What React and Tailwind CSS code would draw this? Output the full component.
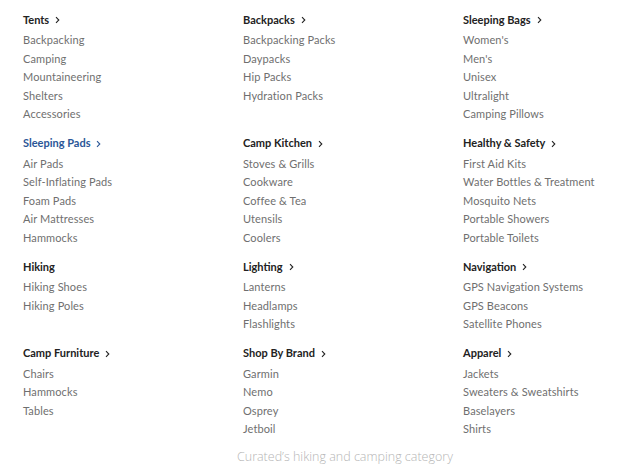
import React from "react";

const rows = [
  [
    { title: "Tents", arrow: true, items: ["Backpacking", "Camping", "Mountaineering", "Shelters", "Accessories"] },
    { title: "Backpacks", arrow: true, items: ["Backpacking Packs", "Daypacks", "Hip Packs", "Hydration Packs"] },
    { title: "Sleeping Bags", arrow: true, items: ["Women's", "Men's", "Unisex", "Ultralight", "Camping Pillows"] },
  ],
  [
    { title: "Sleeping Pads", arrow: true, active: true, items: ["Air Pads", "Self-Inflating Pads", "Foam Pads", "Air Mattresses", "Hammocks"] },
    { title: "Camp Kitchen", arrow: true, items: ["Stoves & Grills", "Cookware", "Coffee & Tea", "Utensils", "Coolers"] },
    { title: "Healthy & Safety", arrow: true, items: ["First Aid Kits", "Water Bottles & Treatment", "Mosquito Nets", "Portable Showers", "Portable Toilets"] },
  ],
  [
    { title: "Hiking", items: ["Hiking Shoes", "Hiking Poles"] },
    { title: "Lighting", arrow: true, items: ["Lanterns", "Headlamps", "Flashlights"] },
    { title: "Navigation", arrow: true, items: ["GPS Navigation Systems", "GPS Beacons", "Satellite Phones"] },
  ],
  [
    { title: "Camp Furniture", arrow: true, items: ["Chairs", "Hammocks", "Tables"] },
    { title: "Shop By Brand", arrow: true, items: ["Garmin", "Nemo", "Osprey", "Jetboil"] },
    { title: "Apparel", arrow: true, items: ["Jackets", "Sweaters & Sweatshirts", "Baselayers", "Shirts"] },
  ],
];

function Chevron() {
  return (
    <svg width="5" height="8" viewBox="0 0 5 8" className="ml-[6px] inline-block" fill="none">
      <path d="M1 1.2 L3.8 4 L1 6.8" stroke="currentColor" strokeWidth="1.1" />
    </svg>
  );
}

function Section({ section }) {
  return (
    <div>
      <div
        className={`mb-px flex h-5 items-center text-[11px] font-bold ${
          section.active ? "text-[#2b5797]" : "text-[#222]"
        }`}
      >
        {section.title}
        {section.arrow && <Chevron />}
      </div>
      <ul>
        {section.items.map((item) => (
          <li key={item} className="h-[18.5px] text-[11px] leading-[18.5px] tracking-[0.01em] text-[#6f6f6f]">
            {item}
          </li>
        ))}
      </ul>
    </div>
  );
}

export default function App() {
  return (
    <div className="h-[467px] w-[617px] bg-white pt-[10px] font-['Lato',sans-serif]">
      <div className="flex flex-col gap-[10px] pl-[23px]">
        {rows.map((row, i) => (
          <div key={i} className="grid grid-cols-[220px_220px_1fr]">
            {row.map((s) => (
              <Section key={s.title} section={s} />
            ))}
          </div>
        ))}
      </div>
      <p className="mt-[8.5px] pl-[237px] font-['Open_Sans',sans-serif] text-[12.5px] font-light leading-5 text-[#b5b5b5]">
        Curated’s hiking and camping category
      </p>
    </div>
  );
}
